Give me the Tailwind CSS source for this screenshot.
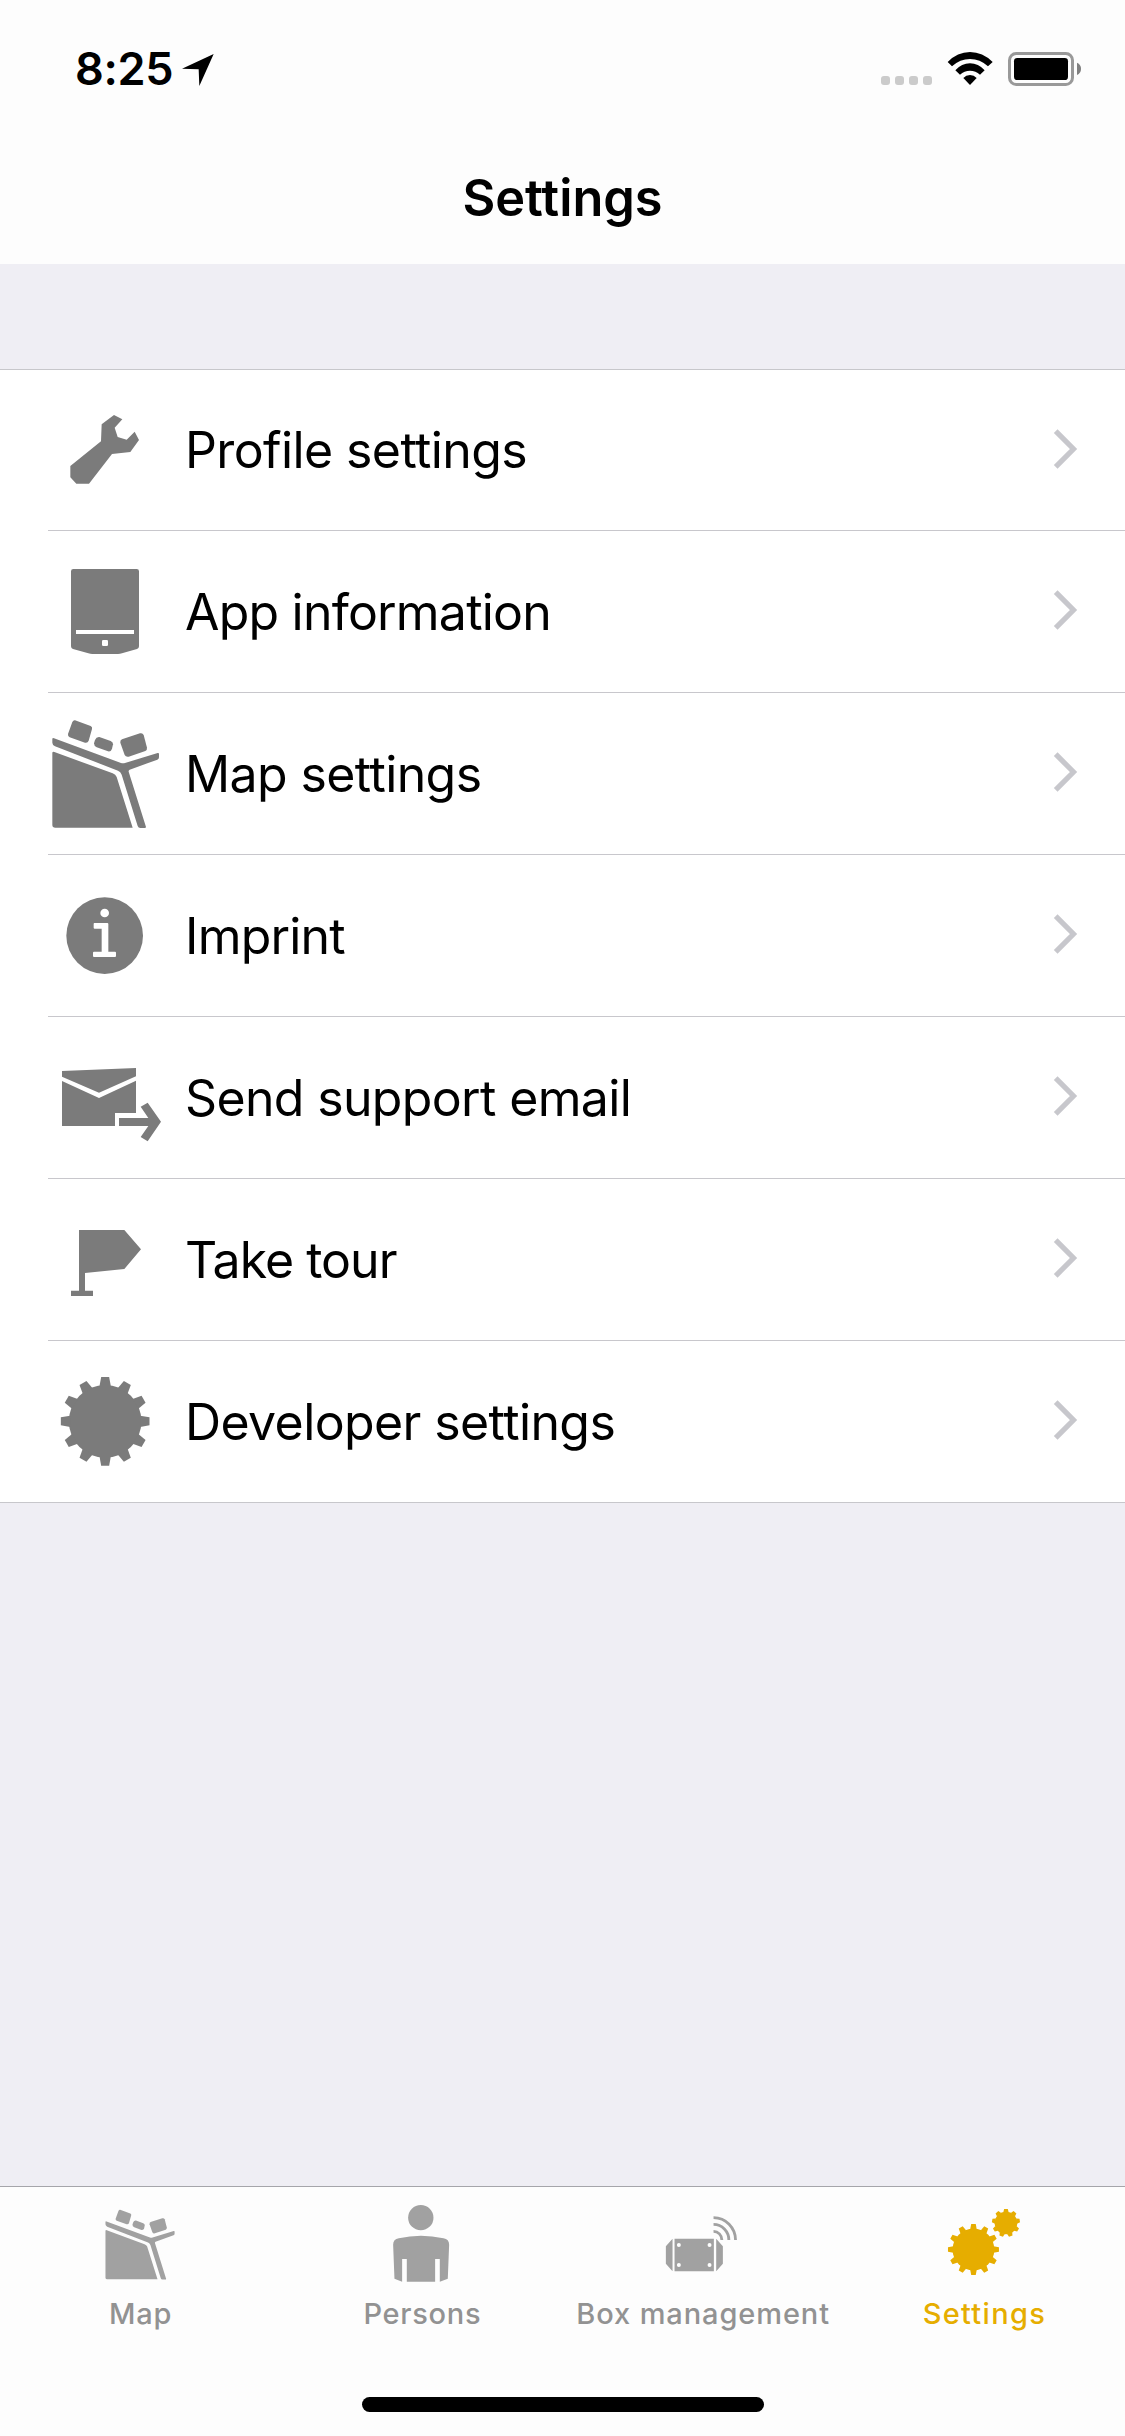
<!DOCTYPE html>
<html lang="en">
<head>
<meta charset="utf-8">
<title>Settings</title>
<script src="https://cdn.jsdelivr.net/npm/@tailwindcss/browser@4"></script>
</head>
<body class="w-[1125px] h-[2436px] flex flex-col overflow-hidden bg-[#efeef4] font-['Inter',sans-serif] text-black">

<!-- Shared shapes -->
<svg class="hidden">
  <defs>
    <path id="tooth" d="M-17-105L-12-133H12L17-105Z"/>
    <g id="gear12">
      <circle r="109"/>
      <use href="#tooth"/><use href="#tooth" transform="rotate(30)"/><use href="#tooth" transform="rotate(60)"/>
      <use href="#tooth" transform="rotate(90)"/><use href="#tooth" transform="rotate(120)"/><use href="#tooth" transform="rotate(150)"/>
      <use href="#tooth" transform="rotate(180)"/><use href="#tooth" transform="rotate(210)"/><use href="#tooth" transform="rotate(240)"/>
      <use href="#tooth" transform="rotate(270)"/><use href="#tooth" transform="rotate(300)"/><use href="#tooth" transform="rotate(330)"/>
    </g>
    <path id="tooth9" d="M-8-32L-5.5-42H5.5L8-32Z"/>
    <g id="gear9">
      <circle r="34"/>
      <use href="#tooth9"/><use href="#tooth9" transform="rotate(40)"/><use href="#tooth9" transform="rotate(80)"/>
      <use href="#tooth9" transform="rotate(120)"/><use href="#tooth9" transform="rotate(160)"/><use href="#tooth9" transform="rotate(200)"/>
      <use href="#tooth9" transform="rotate(240)"/><use href="#tooth9" transform="rotate(280)"/><use href="#tooth9" transform="rotate(320)"/>
    </g>
    <g id="desk">
      <path d="M135 121L182 138Q188 141 186 147L176 182Q173 190 165 188L119 172Q113 169 114 162L127 126Q130 120 135 121Z"/>
      <path d="M208 171L242 183Q250 187 249 193L246 206Q243 216 234 214L200 202Q192 198 192 190L195 180Q199 170 208 171Z"/>
      <path d="M276 178L330 160Q338 158 341 165L351 203Q352 210 346 213L296 230Q288 232 284 225L271 188Q270 181 276 178Z"/>
      <path d="M67 176Q68 173 72 175L273 249Q279 251 285 249L383 219Q387 218 387 222V232Q387 237 382 239L299 269Q295 271 296 275L348 441Q348 444 344 444H331Q325 444 323 438L275 284Q272 275 264 272L75 199Q67 195 67 188Z"/>
      <path d="M67 218Q68 213 73 216L248 280Q257 283 260 291L308 443H76Q67 443 67 435Z"/>
    </g>
    <path id="chevron" d="M1.700 1.200L19.500 19L1.700 36.800" fill="none" stroke="#c7c7cc" stroke-width="5.200"/>
  </defs>
</svg>

<header class="h-[264px] shrink-0 bg-[#fdfdfd]">
  <div class="h-[132px] pl-[75px] pr-[43px] pt-[5px] flex items-center justify-between">
    <div class="flex items-center gap-[10px]">
      <span class="w-[97px] text-[45px] leading-none font-semibold tracking-[-0.3px] whitespace-nowrap">8:25</span>
      <svg class="w-[32px] h-[32px] mt-[3px]" viewBox="547 168 96 96"><path d="M642 168L599 264L597 214L547 212Z"/></svg>
    </div>
    <svg class="w-[202px] h-[36px]" viewBox="390 153 606 108">
      <g fill="#cbcbcb">
        <rect x="393" y="228" width="27" height="27" rx="9"/><rect x="435" y="228" width="27" height="27" rx="9"/>
        <rect x="477" y="228" width="27" height="27" rx="9"/><rect x="519" y="228" width="27" height="27" rx="9"/>
      </g>
      <path d="M593 186Q622 156 660 156T728 186L714 199Q690 177 660 177T606 199Z"/>
      <path d="M616 211Q635 190 660 190T704 211L690 224Q677 212 660 212T630 224Z"/>
      <path d="M640 234Q648 225 660 225T680 234L660 255Z"/>
      <rect x="778.500" y="160.500" width="189" height="93" rx="20" fill="none" stroke="#999" stroke-width="9"/>
      <rect x="792" y="174" width="162" height="66" rx="10"/>
      <path d="M981 188Q993 193 993 206.500T981 225Z" fill="#808080"/>
    </svg>
  </div>
  <h1 class="h-[132px] flex items-center justify-center text-[50.5px] leading-none font-semibold">Settings</h1>
</header>

<main class="grow pt-[105px]">
  <ul class="bg-white border-y border-[#c7c7cb] text-[50px] leading-none fill-[#7b7b7b]">
    <li class="ml-12 h-[161px] pr-[47px] flex items-center border-b border-[#c8c7cc]">
      <svg class="w-[120px] h-[160px]" viewBox="54 30 360 480"><path d="M252 165L277 178L254 203L263 231L290 239L314 215L327 240L301 276L246 282L177 371H139L121 352V318L213 244L215 193Z"/></svg>
      <span class="grow pl-[17px] tracking-[-0.6px]">Profile settings</span>
      <svg class="w-6 h-[38px] mb-[3px] overflow-visible" viewBox="0 0 24 38"><use href="#chevron"/></svg>
    </li>
    <li class="ml-12 h-[162px] pr-[47px] flex items-center border-b border-[#c8c7cc]">
      <svg class="w-[120px] h-[161px]" viewBox="54 513 360 483"><path fill-rule="evenodd" d="M130 627H320Q327 627 327 634V859Q327 865 321 867L276 880Q270 882 264 882H187Q181 882 175 880L129 867Q123 865 123 859V634Q123 627 130 627ZM138 810V822H312V810Z"/><rect x="216" y="840" width="18" height="18" rx="4" fill="#fff"/></svg>
      <span class="grow pl-[17px] tracking-[-0.8px]">App information</span>
      <svg class="w-6 h-[38px] mb-[3px] overflow-visible" viewBox="0 0 24 38"><use href="#chevron"/></svg>
    </li>
    <li class="ml-12 h-[162px] pr-[47px] flex items-center border-b border-[#c8c7cc]">
      <svg class="w-[120px] h-[161px]" viewBox="54 39 360 483"><use href="#desk"/></svg>
      <span class="grow pl-[17px] tracking-[-0.6px]">Map settings</span>
      <svg class="w-6 h-[38px] mb-[3px] overflow-visible" viewBox="0 0 24 38"><use href="#chevron"/></svg>
    </li>
    <li class="ml-12 h-[162px] pr-[47px] flex items-center border-b border-[#c8c7cc]">
      <svg class="w-[120px] h-[161px]" viewBox="54 525 360 483"><circle cx="224" cy="767" r="115"/><g fill="#fff"><circle cx="224" cy="699" r="13"/><path d="M193 729H232Q235 729 235 732V815H255Q258 815 258 818V828Q258 831 255 831H192Q189 831 189 828V818Q189 815 192 815H215V746H194Q191 746 191 743V732Q191 729 193 729Z"/></g></svg>
      <span class="grow pl-[17px] tracking-[-0.8px]">Imprint</span>
      <svg class="w-6 h-[38px] mb-[3px] overflow-visible" viewBox="0 0 24 38"><use href="#chevron"/></svg>
    </li>
    <li class="ml-12 h-[162px] pr-[47px] flex items-center border-b border-[#c8c7cc]">
      <svg class="w-[120px] h-[161px]" viewBox="54 -39 360 483"><path d="M96 123L318 114V139L207 188L96 140Z"/><path d="M96 153L207 204L318 152V249H255V288H96Z"/><path d="M267 264H355L332 230L353 218L393 275L353 334L332 321L355 288H267Z"/></svg>
      <span class="grow pl-[17px] tracking-[-0.65px]">Send support email</span>
      <svg class="w-6 h-[38px] mb-[3px] overflow-visible" viewBox="0 0 24 38"><use href="#chevron"/></svg>
    </li>
    <li class="ml-12 h-[162px] pr-[47px] flex items-center border-b border-[#c8c7cc]">
      <svg class="w-[120px] h-[161px]" viewBox="54 447 360 483"><path d="M147 600H283L333 658L283 717L165 729V782H189V798H123V782H147Z"/></svg>
      <span class="grow pl-[17px] tracking-[-1px]">Take tour</span>
      <svg class="w-6 h-[38px] mb-[3px] overflow-visible" viewBox="0 0 24 38"><use href="#chevron"/></svg>
    </li>
    <li class="ml-12 h-[161px] pr-[47px] flex items-center">
      <svg class="w-[120px] h-[161px]" viewBox="54 33 360 483"><use href="#gear12" transform="translate(225.500 274)"/></svg>
      <span class="grow pl-[17px] tracking-[-0.6px]">Developer settings</span>
      <svg class="w-6 h-[38px] mb-[3px] overflow-visible" viewBox="0 0 24 38"><use href="#chevron"/></svg>
    </li>
  </ul>
</main>

<footer class="h-[250px] shrink-0 border-t border-[#a5a5aa] bg-[#fdfdfd] flex flex-col items-center">
  <nav class="w-full grid grid-cols-4 h-[210px] pt-2 text-[29px] leading-none font-medium tracking-[0.8px] text-[#929292] fill-[#a1a1a1]">
    <a class="flex flex-col items-center gap-[20px]">
      <svg class="w-[90px] h-[84px]" viewBox="107 75 270 252" overflow="visible"><use href="#desk" transform="translate(92 41) scale(.648)"/></svg>
      Map
    </a>
    <a class="flex flex-col items-center gap-[20px]">
      <svg class="w-[90px] h-[84px]" viewBox="950.600 75 270 252" overflow="visible"><circle cx="1082" cy="143" r="38"/><path d="M1016 205Q1082 190 1150 205Q1167 208 1167 224L1163 326L1139 335V267H1125V335H1040V267H1026V335L1003 326L999 224Q999 208 1016 205Z"/></svg>
      <span class="pl-[1px] tracking-[0.7px]">Persons</span>
    </a>
    <a class="flex flex-col items-center gap-[20px]">
      <svg class="w-[90px] h-[84px]" viewBox="24.400 0 270 252"><path d="M68 131V229L48 206V154ZM199 131V229L219 206V154ZM74 131H192V229H74Z"/><g fill="#fdfdfd"><circle cx="87" cy="150" r="6"/><circle cx="179" cy="150" r="6"/><circle cx="87" cy="210" r="6"/><circle cx="179" cy="210" r="6"/></g><g fill="none" stroke="#a1a1a1" stroke-width="8.500"><path d="M191 68A66 67 0 0 1 257 135"/><path d="M191 88A46 47 0 0 1 237 135"/><path d="M191 109A25 26 0 0 1 216 135"/></g></svg>
      <span class="whitespace-nowrap tracking-[0.9px]">Box management</span>
    </a>
    <a class="flex flex-col items-center gap-[20px] text-[#e6ad00] fill-[#e6ad00]">
      <svg class="w-[90px] h-[84px]" viewBox="867.100 0 270 252"><use href="#gear12" transform="translate(970.500 163.500) scale(.575)"/><use href="#gear9" transform="translate(1068 84)"/></svg>
      <span class="tracking-[1.3px]">Settings</span>
    </a>
  </nav>
  <div class="w-[402px] h-[15px] rounded-full bg-black"></div>
</footer>
</body>
</html>
